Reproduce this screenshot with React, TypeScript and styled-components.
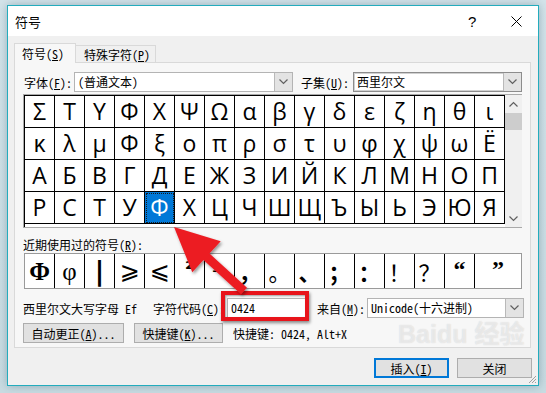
import React from 'react';
import styled, { createGlobalStyle } from 'styled-components';

const UI_FONT = '"Noto Sans Mono CJK SC", "Noto Sans CJK SC", "Liberation Mono", monospace';

const GlobalStyle = createGlobalStyle`
  html, body {
    margin: 0;
    padding: 0;
  }
  body {
    width: 546px;
    height: 393px;
    overflow: hidden;
    font-family: ${UI_FONT};
    font-size: 12px;
    color: #000;
  }
`;

const Page = styled.div`
  position: relative;
  width: 546px;
  height: 393px;
  box-sizing: border-box;
  padding: 5px 0 0 7px;
  background: linear-gradient(180deg, #d4e4ea 0%, #c9dce2 100%);
`;

const Window = styled.div`
  position: relative;
  width: 532px;
  height: 381px;
  box-sizing: border-box;
  border: 1px solid #23acbd;
  background: #f0f0f0;
  box-shadow: 0 0 9px rgba(40, 80, 100, 0.35);
  display: flex;
  flex-direction: column;
`;

const TitleBar = styled.div`
  height: 30px;
  background: #fff;
  display: flex;
  align-items: center;
  padding-left: 7px;
  font-family: "Noto Sans CJK SC", sans-serif;
  font-size: 13px;
`;

const TitleText = styled.div`
  flex: 1;
`;

const HelpMark = styled.span`
  font-family: "Liberation Sans", sans-serif;
  font-size: 15px;
  width: 9px;
`;

const CloseMark = styled.svg`
  margin: 0 16px 0 34px;
`;

const Body = styled.div`
  flex: 1;
  display: flex;
  flex-direction: column;
  padding: 7px 0 0 6px;
`;

const TabRow = styled.div`
  display: flex;
  align-items: flex-end;
  height: 19px;
`;

const Tab = styled.div<{ $active?: boolean; $width: number }>`
  position: relative;
  box-sizing: border-box;
  width: ${p => p.$width}px;
  height: ${p => (p.$active ? 20 : 17)}px;
  margin-bottom: ${p => (p.$active ? -1 : 0)}px;
  margin-left: ${p => (p.$active ? 0 : -1)}px;
  z-index: ${p => (p.$active ? 1 : 0)};
  border: 1px solid #d9d9d9;
  border-bottom: none;
  background: ${p => (p.$active ? '#f7f7f7' : '#f0f0f0')};
  padding-left: ${p => (p.$active ? 7 : 8)}px;
  line-height: ${p => (p.$active ? 19 : 17)}px;
  white-space: nowrap;
`;

const Panel = styled.div`
  width: 517px;
  box-sizing: border-box;
  border: 1px solid #d9d9d9;
  background: #f7f7f7;
  padding: 9px 0 4px 8px;
  display: flex;
  flex-direction: column;
`;

const FieldRow = styled.div<{ $height: number; $mt?: number }>`
  display: flex;
  align-items: center;
  height: ${p => p.$height}px;
  margin-top: ${p => p.$mt ?? 0}px;
  white-space: nowrap;
`;

const Label = styled.span<{ $ml?: number }>`
  margin-left: ${p => p.$ml ?? 0}px;
`;

const SelectBox = styled.div<{ $width: number; $ml: number; $strong?: boolean }>`
  box-sizing: border-box;
  width: ${p => p.$width}px;
  height: 20px;
  margin-left: ${p => p.$ml}px;
  display: flex;
  background: #fff;
  border: 1px solid ${p => (p.$strong ? '#8c8c8c' : '#b4b4b4')};
  box-shadow: ${p => (p.$strong ? 'inset 0 0 0 1px #d0d0d0' : 'none')};
`;

const SelectText = styled.div`
  flex: 1;
  padding-left: 3px;
  line-height: 18px;
  overflow: hidden;
`;

const SelectArrow = styled.div`
  width: 17px;
  background: #e3e3e3;
  border-left: 1px solid #b9b9b9;
  display: flex;
  align-items: center;
  justify-content: center;
`;

const GridBox = styled.div`
  display: flex;
  width: 499px;
  height: 134px;
  box-sizing: border-box;
  margin-top: 2px;
  border: 1px solid #a9a9a9;
  border-right: none;
  background: #fff;
`;

const CharGrid = styled.div`
  display: grid;
  grid-template-columns: repeat(16, 30px);
  grid-auto-rows: 32px;
  align-content: start;
  width: 481px;
  height: 132px;
  border-top: 1px solid #000;
  border-left: 1px solid #000;
  box-sizing: border-box;
  overflow: hidden;
`;

const Cell = styled.div<{ $selected?: boolean }>`
  box-sizing: border-box;
  border-right: 1px solid #000;
  border-bottom: 1px solid #000;
  display: flex;
  align-items: center;
  justify-content: center;
  font-family: "Open Sans", "DejaVu Sans", sans-serif;
  font-size: 23px;
  line-height: 1;
  padding-bottom: 1px;
  color: ${p => (p.$selected ? '#fff' : '#000')};
  background: ${p => (p.$selected ? '#0078d7' : '#fff')};
  outline: ${p => (p.$selected ? '1px dotted #1a1a1a' : 'none')};
  outline-offset: -2px;
`;

const ScrollBar = styled.div`
  width: 17px;
  background: #f0f0f0;
  display: flex;
  flex-direction: column;
`;

const ScrollArrow = styled.div`
  height: 17px;
  display: flex;
  align-items: center;
  justify-content: center;
`;

const ScrollThumb = styled.div`
  height: 17px;
  margin-top: 1px;
  background: #cdcdcd;
`;

const ScrollTrack = styled.div`
  flex: 1;
`;

const RecentLabel = styled.div`
  margin-top: 9px;
  line-height: 16px;
  height: 16px;
`;

const RecentRow = styled.div`
  display: flex;
  width: 498px;
  height: 36px;
  box-sizing: border-box;
  margin-left: 1px;
  border: 1px solid #9a9a9a;
  background: #fff;
`;

const RecentCell = styled.div<{ $font: string; $size: number; $last?: boolean; $bold?: boolean; $dy?: number }>`
  box-sizing: border-box;
  width: ${p => (p.$last ? 'auto' : '30px')};
  flex: ${p => (p.$last ? 1 : 'none')};
  border-right: ${p => (p.$last ? 'none' : '1px solid #000')};
  display: flex;
  align-items: center;
  justify-content: center;
  font-family: ${p => p.$font};
  font-size: ${p => p.$size}px;
  font-weight: ${p => (p.$bold ? 'bold' : 'normal')};
  line-height: 1;
  padding-top: ${p => Math.max(0, p.$dy ?? 0)}px;
  padding-bottom: ${p => Math.max(0, -(p.$dy ?? 0))}px;
`;

const InfoInput = styled.div`
  box-sizing: border-box;
  width: 79px;
  height: 20px;
  margin-left: 2px;
  border: 1px solid #b4b4b4;
  background: #fff;
  padding-left: 3px;
  line-height: 18px;
`;

const ButtonRow = styled.div`
  display: flex;
  align-items: center;
  height: 20px;
  margin-top: 4px;
  white-space: nowrap;
`;

const Button = styled.div<{ $width: number; $ml?: number; $default?: boolean }>`
  box-sizing: border-box;
  width: ${p => p.$width}px;
  height: 20px;
  margin-left: ${p => p.$ml ?? 0}px;
  display: flex;
  align-items: center;
  justify-content: center;
  background: #e1e1e1;
  border: ${p => (p.$default ? '2px solid #0078d7' : '1px solid #adadad')};
  white-space: nowrap;
`;

const Footer = styled.div`
  display: flex;
  justify-content: flex-end;
  margin-top: 10px;
  padding-right: 6px;
  gap: 8px;
`;

const Watermark = styled.div`
  position: absolute;
  left: 398px;
  top: 322px;
  font-family: "Liberation Sans", "Noto Sans CJK SC", sans-serif;
  font-weight: bold;
  font-size: 25px;
  color: rgba(255, 255, 255, 0.5);
  text-shadow: 0 0 1px rgba(120, 120, 120, 0.3);
  pointer-events: none;
  line-height: 1;
  white-space: nowrap;
`;

const Grip = styled.svg`
  position: absolute;
  right: 1px;
  bottom: 1px;
`;

const RedBox = styled.div`
  position: absolute;
  left: 221px;
  top: 291px;
  width: 88px;
  height: 30px;
  box-sizing: border-box;
  border: 4px solid #e8141b;
  box-shadow: 1px 2px 3px rgba(0, 0, 0, 0.45), inset 1px 1px 2px rgba(0, 0, 0, 0.35);
  pointer-events: none;
`;

const ArrowLayer = styled.svg`
  position: absolute;
  left: 0;
  top: 0;
  pointer-events: none;
`;

const Chevron = ({ up }: { up?: boolean }) => (
  <svg width="9" height="6" viewBox="0 0 9 6">
    <path
      d={up ? 'M0.5 5.5 L4.5 1.5 L8.5 5.5' : 'M0.5 0.5 L4.5 4.5 L8.5 0.5'}
      fill="none"
      stroke="#606060"
      strokeWidth="1.2"
    />
  </svg>
);

const Select = ({ width, ml, text, strong }: { width: number; ml: number; text: string; strong?: boolean }) => (
  <SelectBox $width={width} $ml={ml} $strong={strong}>
    <SelectText>{text}</SelectText>
    <SelectArrow>
      <Chevron />
    </SelectArrow>
  </SelectBox>
);

const ROWS = [
  'ΣΤΥΦΧΨΩαβγδεζηθι',
  'κλμΦξοπρστυφχψωЁ',
  'АБВГДЕЖЗИЙКЛМНОП',
  'РСТУФХЦЧШЩЪЫЬЭЮЯ',
];

const SERIF = '"Liberation Serif", "DejaVu Serif", serif';
const SANS = '"DejaVu Sans", sans-serif';
const CJK = '"Noto Sans CJK SC", sans-serif';

const RECENT: { ch: string; font: string; size: number; bold?: boolean; dy?: number }[] = [
  { ch: 'Φ', font: SERIF, size: 25, bold: true },
  { ch: 'φ', font: SERIF, size: 25 },
  { ch: '|', font: SANS, size: 26, bold: true },
  { ch: '⩾', font: SANS, size: 24 },
  { ch: '⩽', font: SANS, size: 24 },
  { ch: '²', font: SANS, size: 20, bold: true, dy: -4 },
  { ch: '→', font: SANS, size: 18 },
  { ch: '，', font: CJK, size: 22, bold: true },
  { ch: '。', font: CJK, size: 22 },
  { ch: '、', font: CJK, size: 22, bold: true },
  { ch: '；', font: CJK, size: 22, bold: true },
  { ch: '：', font: CJK, size: 22, bold: true },
  { ch: '！', font: CJK, size: 22 },
  { ch: '？', font: CJK, size: 22 },
  { ch: '“', font: SERIF, size: 24, bold: true, dy: -4 },
  { ch: '”', font: SERIF, size: 24, bold: true, dy: -4 },
];

// arrow annotation geometry: tip near the selected cell, tail at the code box
const ARROW = '174,227 220.7,241.2 209.5,253.4 247,287.7 241,294.3 203.5,260 192.3,272.2';

export default function App() {
  return (
    <>
      <GlobalStyle />
      <Page>
        <Window>
          <TitleBar>
            <TitleText>符号</TitleText>
            <HelpMark>?</HelpMark>
            <CloseMark width="11" height="11" viewBox="0 0 11 11">
              <path d="M0.5 0.5 L10.5 10.5 M10.5 0.5 L0.5 10.5" stroke="#000" strokeWidth="1" />
            </CloseMark>
          </TitleBar>
          <Body>
            <TabRow>
              <Tab $active $width={62}>符号(<u>S</u>)</Tab>
              <Tab $width={81}>特殊字符(<u>P</u>)</Tab>
            </TabRow>
            <Panel>
              <FieldRow $height={20}>
                <Label $ml={1}>字体(<u>F</u>):</Label>
                <Select width={219} ml={2} text="(普通文本)" />
                <Label $ml={8}>子集(<u>U</u>):</Label>
                <Select width={169} ml={4} text="西里尔文" strong />
              </FieldRow>

              <GridBox>
                <CharGrid>
                  {ROWS.map((row, r) =>
                    Array.from(row).map((ch, c) => (
                      <Cell key={`${r}-${c}`} $selected={r === 3 && c === 4}>
                        {ch}
                      </Cell>
                    ))
                  )}
                </CharGrid>
                <ScrollBar>
                  <ScrollArrow>
                    <Chevron up />
                  </ScrollArrow>
                  <ScrollThumb />
                  <ScrollTrack />
                  <ScrollArrow>
                    <Chevron />
                  </ScrollArrow>
                </ScrollBar>
              </GridBox>

              <RecentLabel>近期使用过的符号(<u>R</u>):</RecentLabel>
              <RecentRow>
                {RECENT.map((item, i) => (
                  <RecentCell
                    key={i}
                    $font={item.font}
                    $size={item.size}
                    $bold={item.bold}
                    $dy={item.dy}
                    $last={i === RECENT.length - 1}
                  >
                    {item.ch}
                  </RecentCell>
                ))}
              </RecentRow>

              <FieldRow $height={22} $mt={8}>
                <Label>西里尔文大写字母 Ef</Label>
                <Label $ml={16}>字符代码(<u>C</u>):</Label>
                <InfoInput>0424</InfoInput>
                <Label $ml={11}>来自(<u>M</u>):</Label>
                <Select width={157} ml={2} text="Unicode(十六进制)" />
              </FieldRow>

              <ButtonRow>
                <Button $width={101}>自动更正(<u>A</u>)...</Button>
                <Button $width={89} $ml={10}>快捷键(<u>K</u>)...</Button>
                <Label $ml={10}>快捷键: 0424, Alt+X</Label>
              </ButtonRow>
            </Panel>
            <Footer>
              <Button $width={75} $default>插入(<u>I</u>)</Button>
              <Button $width={75}>关闭</Button>
            </Footer>
          </Body>
          <Grip width="10" height="10" viewBox="0 0 10 10">
            <path d="M9 2 L2 9 M9 5 L5 9 M9 8 L8 9" stroke="#a0a0a0" strokeWidth="1" />
          </Grip>
        </Window>

        <Watermark>Baidu 经验</Watermark>

        <RedBox />
        <ArrowLayer width="546" height="393" viewBox="0 0 546 393">
          <defs>
            <filter id="sh" x="-20%" y="-20%" width="140%" height="140%">
              <feDropShadow dx="1.5" dy="2" stdDeviation="1.5" floodColor="#000" floodOpacity="0.4" />
            </filter>
          </defs>
          <polygon points={ARROW} fill="#ec1c24" filter="url(#sh)" />
        </ArrowLayer>
      </Page>
    </>
  );
}
